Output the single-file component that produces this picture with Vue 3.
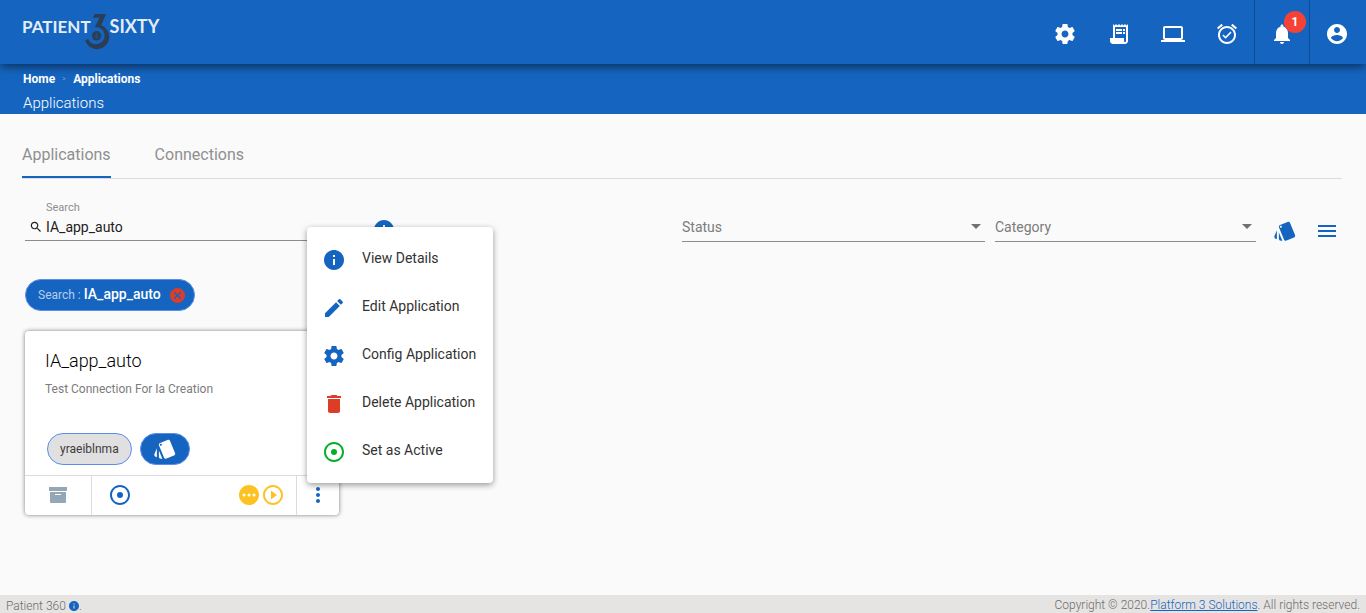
<script setup>
import { ref } from 'vue'

const search = ref('IA_app_auto')

const icons = {
  settings: 'M19.43 12.98c.04-.32.07-.64.07-.98s-.03-.66-.07-.98l2.11-1.65c.19-.15.24-.42.12-.64l-2-3.46c-.12-.22-.39-.3-.61-.22l-2.49 1c-.52-.4-1.08-.73-1.69-.98l-.38-2.65C14.46 2.18 14.25 2 14 2h-4c-.25 0-.46.18-.49.42l-.38 2.65c-.61.25-1.17.59-1.69.98l-2.49-1c-.23-.09-.49 0-.61.22l-2 3.46c-.13.22-.07.49.12.64l2.11 1.65c-.04.32-.07.65-.07.98s.03.66.07.98l-2.11 1.65c-.19.15-.24.42-.12.64l2 3.46c.12.22.39.3.61.22l2.49-1c.52.4 1.08.73 1.69.98l.38 2.65c.03.24.24.42.49.42h4c.25 0 .46-.18.49-.42l.38-2.65c.61-.25 1.17-.59 1.69-.98l2.49 1c.23.09.49 0 .61-.22l2-3.46c.12-.22.07-.49-.12-.64l-2.11-1.65zM12 15.5c-1.93 0-3.5-1.57-3.5-3.5s1.57-3.5 3.5-3.5 3.5 1.57 3.5 3.5-1.57 3.5-3.5 3.5z',
  receipt: 'M19.5 3.5L18 2l-1.5 1.5L15 2l-1.5 1.5L12 2l-1.5 1.5L9 2 7.5 3.5 6 2v14H3v3c0 1.66 1.34 3 3 3h12c1.66 0 3-1.34 3-3V2l-1.5 1.5zM19 19c0 .55-.45 1-1 1s-1-.45-1-1v-3H8V5h11v14zM9 7h6v2H9zM16 7h2v2h-2zM9 10h6v2H9zM16 10h2v2h-2z',
  laptop: 'M20 18c1.1 0 1.99-.9 1.99-2L22 6c0-1.1-.9-2-2-2H4c-1.1 0-2 .9-2 2v10c0 1.1.9 2 2 2H0v2h24v-2h-4zM4 6h16v10H4V6z',
  alarm: 'M22 5.72l-4.6-3.86-1.29 1.53 4.6 3.86L22 5.72zM7.88 3.39L6.6 1.86 2 5.71l1.29 1.53 4.59-3.85zM12 4c-4.97 0-9 4.03-9 9s4.02 9 9 9c4.97 0 9-4.03 9-9s-4.03-9-9-9zm0 16c-3.87 0-7-3.13-7-7s3.13-7 7-7 7 3.13 7 7-3.13 7-7 7zm-1.46-5.47L8.41 12.4l-1.06 1.06 3.18 3.18 6-6-1.06-1.06-4.93 4.95z',
  bell: 'M12 22c1.1 0 2-.9 2-2h-4c0 1.1.89 2 2 2zm6-6v-5c0-3.07-1.64-5.64-4.5-6.32V4c0-.83-.67-1.5-1.5-1.5s-1.5.67-1.5 1.5v.68C7.63 5.36 6 7.92 6 11v5l-2 2v1h16v-1l-2-2z',
  account: 'M12 2C6.48 2 2 6.48 2 12s4.48 10 10 10 10-4.48 10-10S17.52 2 12 2zm0 3c1.66 0 3 1.34 3 3s-1.34 3-3 3-3-1.34-3-3 1.34-3 3-3zm0 14.2c-2.5 0-4.71-1.28-6-3.22.03-1.99 4-3.08 6-3.08 1.99 0 5.97 1.09 6 3.08-1.29 1.94-3.5 3.22-6 3.22z',
  info: 'M12 2C6.48 2 2 6.48 2 12s4.48 10 10 10 10-4.48 10-10S17.52 2 12 2zm1 15h-2v-6h2v6zm0-8h-2V7h2v2z',
  edit: 'M3 17.25V21h3.75L17.81 9.94l-3.75-3.75L3 17.25zM20.71 7.04c.39-.39.39-1.02 0-1.41l-2.34-2.34c-.39-.39-1.02-.39-1.41 0l-1.83 1.83 3.75 3.75 1.83-1.83z',
  trash: 'M6 19c0 1.1.9 2 2 2h8c1.1 0 2-.9 2-2V7H6v12zM19 4h-3.5l-1-1h-5l-1 1H5v2h14V4z',
  target: 'M12 2C6.48 2 2 6.48 2 12s4.48 10 10 10 10-4.48 10-10S17.52 2 12 2zm0 18c-4.42 0-8-3.58-8-8s3.58-8 8-8 8 3.58 8 8-3.58 8-8 8zm0-11a3 3 0 1 0 0 6a3 3 0 1 0 0-6z',
  cards: 'M2.53 19.65l1.34.56v-9.03l-2.43 5.86c-.41 1.02.08 2.19 1.09 2.61zm19.5-3.7L17.07 3.98c-.31-.75-1.04-1.21-1.81-1.23-.26 0-.53.04-.79.15L7.1 5.95c-.75.31-1.21 1.03-1.23 1.8-.01.27.04.54.15.8l4.96 11.97c.31.76 1.05 1.22 1.83 1.23.26 0 .52-.05.77-.15l7.36-3.05c1.02-.42 1.51-1.59 1.09-2.6zM7.88 8.75c-.55 0-1-.45-1-1s.45-1 1-1 1 .45 1 1-.45 1-1 1zm-2 11c0 1.1.9 2 2 2h1.45l-3.45-8.34v6.34z',
  lines: 'M3 18h18v-2H3v2zm0-5h18v-2H3v2zm0-7v2h18V6H3z',
  dots: 'M12 8c1.1 0 2-.9 2-2s-.9-2-2-2-2 .9-2 2 .9 2 2 2zm0 2c-1.1 0-2 .9-2 2s.9 2 2 2 2-.9 2-2-.9-2-2-2zm0 6c-1.1 0-2 .9-2 2s.9 2 2 2 2-.9 2-2-.9-2-2-2z',
  play: 'M10 16.5l6-4.5-6-4.5v9zM12 2C6.48 2 2 6.48 2 12s4.48 10 10 10 10-4.48 10-10S17.52 2 12 2zm0 18c-4.41 0-8-3.59-8-8s3.59-8 8-8 8 3.59 8 8-3.59 8-8 8z',
  pending: 'M12 2C6.48 2 2 6.48 2 12s4.48 10 10 10 10-4.48 10-10S17.52 2 12 2zM7 13.5a1.5 1.5 0 1 1 0-3a1.5 1.5 0 1 1 0 3zM12 13.5a1.5 1.5 0 1 1 0-3a1.5 1.5 0 1 1 0 3zM17 13.5a1.5 1.5 0 1 1 0-3a1.5 1.5 0 1 1 0 3z',
  search: 'M15.5 14h-.79l-.28-.27C15.41 12.59 16 11.11 16 9.5 16 5.91 13.09 3 9.5 3S3 5.91 3 9.5 5.91 16 9.5 16c1.61 0 3.09-.59 4.23-1.57l.27.28v.79l5 4.99L20.49 19l-4.99-5zm-6 0C7.01 14 5 11.99 5 9.5S7.01 5 9.5 5 14 7.01 14 9.5 11.99 14 9.5 14z'
}

const tools = [
  { icon: 'settings', label: 'Settings' },
  { icon: 'receipt', label: 'Audit' },
  { icon: 'laptop', label: 'Workspace' },
  { icon: 'alarm', label: 'Jobs' }
]

const menu = [
  { icon: 'info', label: 'View Details', tone: 'blue' },
  { icon: 'edit', label: 'Edit Application', tone: 'blue' },
  { icon: 'settings', label: 'Config Application', tone: 'blue' },
  { icon: 'trash', label: 'Delete Application', tone: 'red' },
  { icon: 'target', label: 'Set as Active', tone: 'green' }
]
</script>

<template>
  <div class="page">
    <header class="topbar">
      <a class="logo" href="#" aria-label="Patient 3Sixty">
        <span>PATIENT</span>
        <svg class="three" viewBox="0 0 26 38" aria-hidden="true">
          <path d="M10 0H22L17 12A13 13 0 1 1 0 28L3 26A9 9 0 1 0 10 14L15 4H8z" fill="#2c3e55" />
          <circle cx="12" cy="23" r="5" fill="#2c3e55" />
          <path d="M12 20v6M9 24h6" stroke="#1e5290" stroke-width="1" />
        </svg>
        <span>SIXTY</span>
      </a>
      <nav class="tools" aria-label="Tools">
        <button v-for="t in tools" :key="t.icon" class="tool" :aria-label="t.label">
          <svg class="icon" viewBox="0 0 24 24"><path :d="icons[t.icon]" /></svg>
        </button>
        <button class="tool divided" aria-label="Notifications">
          <svg class="icon" viewBox="0 0 24 24"><path :d="icons.bell" /></svg>
          <span class="badge">1</span>
        </button>
        <button class="tool divided" aria-label="Account">
          <svg class="icon" viewBox="0 0 24 24"><path :d="icons.account" /></svg>
        </button>
      </nav>
    </header>

    <section class="subbar">
      <nav class="crumbs" aria-label="Breadcrumb">
        <a href="#">Home</a><span class="sep">&gt;</span><a href="#">Applications</a>
      </nav>
      <h1>Applications</h1>
    </section>

    <main class="content">
      <nav class="tabs">
        <a class="tab active" href="#">Applications</a>
        <a class="tab" href="#">Connections</a>
      </nav>

      <div class="filters">
        <div class="field search">
          <label for="search">Search</label>
          <svg viewBox="0 0 24 24" aria-hidden="true"><path :d="icons.search" /></svg>
          <input id="search" v-model="search" type="text">
        </div>
        <button class="hint blue" aria-label="Search help">
          <svg class="icon" viewBox="0 0 24 24"><path :d="icons.info" /></svg>
        </button>
        <div class="field select status">
          <select aria-label="Status"><option>Status</option></select>
          <svg viewBox="0 0 10 5" aria-hidden="true"><path d="M0 0h10L5 5z" /></svg>
        </div>
        <div class="field select category">
          <select aria-label="Category"><option>Category</option></select>
          <svg viewBox="0 0 10 5" aria-hidden="true"><path d="M0 0h10L5 5z" /></svg>
        </div>
        <div class="views blue">
          <button aria-label="Categories"><svg class="icon" viewBox="0 0 24 24"><path :d="icons.cards" /></svg></button>
          <button aria-label="List view"><svg class="icon" viewBox="0 0 24 24"><path :d="icons.lines" /></svg></button>
        </div>
      </div>

      <div class="chip">
        <span class="chip-key">Search :</span>
        <span class="chip-value">IA_app_auto</span>
        <button aria-label="Remove filter">
          <svg viewBox="0 0 16 16"><circle cx="8" cy="8" r="8" fill="#dd3c27" /><path d="M4.5 4.5l7 7M11.5 4.5l-7 7" stroke="#1565c0" stroke-width="1.5" /></svg>
        </button>
      </div>

      <article class="card">
        <div class="card-body">
          <h2>IA_app_auto</h2>
          <p>Test Connection For Ia Creation</p>
          <div class="tags">
            <span class="tag">yraeiblnma</span>
            <button class="tag solid" aria-label="Category">
              <svg class="icon" viewBox="0 0 24 24"><path :d="icons.cards" /></svg>
            </button>
          </div>
        </div>
        <footer class="card-foot">
          <button class="archive" aria-label="Archive">
            <svg viewBox="0 0 18 16"><path d="M0 0h18v4H0z" /><path fill-rule="evenodd" d="M1 5h16v10q0 1-1 1H2q-1 0-1-1zM6 7h6v1H6z" /></svg>
          </button>
          <div class="states">
            <button class="blue" aria-label="Active state"><svg class="icon" viewBox="0 0 24 24"><path :d="icons.target" /></svg></button>
            <span class="runs">
              <button aria-label="Pending"><svg class="icon" viewBox="0 0 24 24"><path :d="icons.pending" fill-rule="evenodd" /></svg></button>
              <button aria-label="Run"><svg class="icon" viewBox="0 0 24 24"><path :d="icons.play" /></svg></button>
            </span>
          </div>
          <div class="more">
            <button class="blue" aria-label="More actions" aria-expanded="true">
              <svg class="icon" viewBox="0 0 24 24"><path :d="icons.dots" /></svg>
            </button>
            <div class="menu" role="menu">
              <button v-for="m in menu" :key="m.label" role="menuitem">
                <svg class="icon" :class="m.tone" viewBox="0 0 24 24"><path :d="icons[m.icon]" /></svg>
                <span>{{ m.label }}</span>
              </button>
            </div>
          </div>
        </footer>
      </article>
    </main>

    <footer class="bottom">
      <span class="brand"><span>Patient 360</span><svg class="blue" viewBox="2 2 20 20" aria-hidden="true"><path :d="icons.info" /></svg><span>.</span></span>
      <span>Copyright © 2020.<a href="#">Platform 3 Solutions</a>. All rights reserved.</span>
    </footer>
  </div>
</template>

<style>
body { background: #fafafa; }
</style>

<style scoped>
.page {
  min-height: 100vh;
  display: flex;
  flex-direction: column;
  font-family: Roboto, "Liberation Sans", sans-serif;
  font-size: 14px;
  color: #212121;
}
.page * { box-sizing: border-box; }
button {
  display: flex;
  align-items: center;
  justify-content: center;
  padding: 0;
  border: 0;
  background: none;
  color: inherit;
  font: inherit;
  cursor: pointer;
}
svg { display: block; fill: currentColor; flex: none; }
.icon { width: 24px; height: 24px; }
.blue { color: #1565c0; }
.red { color: #dd3c27; }
.green { color: #06ad29; }

.topbar {
  height: 64px;
  display: flex;
  justify-content: space-between;
  padding-left: 22px;
  background: #1565c0;
  color: #fff;
  position: relative;
  z-index: 1;
  box-shadow: 0 2px 10px rgba(0, 0, 0, .6);
}
.logo {
  display: flex;
  align-items: flex-start;
  padding-top: 14px;
  color: #e3edf8;
  font: 700 17px/25px Lato, sans-serif;
  text-decoration: none;
}
.logo span:last-child { font-size: 18px; }
.three { width: 25px; height: 36px; margin: 0 0 0 -6px; }
.tools { display: flex; }
.tool { width: 54px; padding-top: 4px; position: relative; }
.divided { width: 55px; border-left: 1px solid #104d93; }
.divided:last-child { width: 57px; padding-right: 2px; }
.badge {
  position: absolute;
  top: 11px;
  right: 3px;
  width: 22px;
  border-radius: 50%;
  background: #f44336;
  font-size: 12px;
  font-weight: 700;
  line-height: 22px;
}

.subbar {
  height: 50px;
  padding: 6px 23px 0;
  background: #1565c0;
  color: #fff;
}
.crumbs { display: flex; align-items: center; font-size: 12px; line-height: 18px; font-weight: 700; }
.crumbs a { color: inherit; text-decoration: none; }
.sep { width: 18px; text-align: center; font-size: 7px; font-weight: 400; color: #64a0ef; }
h1 { margin: 5px 0 0; font-size: 15px; line-height: 20px; font-weight: 300; }

.content { flex: 1; padding: 16px 24px 0 22px; }
.tabs { display: flex; gap: 44px; border-bottom: 1px solid #dcdcdc; }
.tab {
  height: 48px;
  font-size: 16px;
  line-height: 50px;
  color: #8f8f8f;
  text-decoration: none;
}
.tab.active { border-bottom: 2px solid #1565c0; }

.filters { display: flex; align-items: flex-end; padding: 22px 3px 0; }
.field { position: relative; border-bottom: 1px solid #8c8c8c; }
.search { flex: 0 1 347px; display: grid; grid-template-columns: 21px 1fr; align-items: center; height: 40px; margin-bottom: 1px; }
.search label { grid-column: 2; font-size: 11px; line-height: 13px; color: #8f8f8f; }
.search svg { width: 14px; height: 14px; margin-left: 4px; }
.search input {
  width: 100%;
  height: 26px;
  padding: 0;
  border: 0;
  outline: 0;
  background: none;
  color: #212121;
  font: inherit;
}
.hint { margin: 0 auto 0 0; }
.select { display: flex; align-items: center; height: 30px; }
.select select {
  width: 100%;
  height: 30px;
  padding: 0;
  border: 0;
  outline: 0;
  appearance: none;
  background: none;
  color: #7c7c7c;
  font: inherit;
}
.select svg { position: absolute; right: 4px; width: 10px; color: #707070; pointer-events: none; }
.status { flex: 0 1 303px; margin-right: 10px; }
.category { flex: 0 1 261px; }
.views { display: flex; align-self: flex-end; gap: 18px; height: 23px; padding-left: 17px; }
.views button { align-items: flex-start; }

.chip {
  display: inline-flex;
  align-items: center;
  height: 32px;
  margin: 37px 0 0 3px;
  padding: 0 9px 0 12px;
  border: 1px solid #5b8def;
  border-radius: 16px;
  background: #1565c0;
  color: #fff;
}
.chip-key { margin-right: 3px; font-size: 12px; color: #b5cdec; }
.chip-value { padding-bottom: 2px; font-weight: 500; }
.chip svg { width: 15px; height: 15px; margin-left: 9px; }

.card {
  width: 314px;
  margin: 20px 0 0 3px;
  border-radius: 4px;
  background: #fff;
  box-shadow: 0 0 4px rgba(0, 0, 0, .5);
}
.card-body { padding: 18px 20px 10px; }
h2 { margin: 0; font-size: 18px; line-height: 24px; font-weight: 300; color: #000; }
p { margin: 8px 0 0; font-size: 12px; line-height: 16px; color: #7c7c7c; }
.tags { display: flex; gap: 8px; margin: 36px 0 0 2px; }
.tag {
  height: 32px;
  padding: 0 12px;
  border: 1px solid #5b8def;
  border-radius: 16px;
  background: #e0e0e0;
  font-size: 12px;
  line-height: 30px;
  color: #3c3c3c;
}
.solid { background: #1565c0; color: #fff; }
.card-foot { display: flex; height: 40px; border-top: 1px solid #dcdcdc; }
.archive { width: 66px; padding-bottom: 2px; color: #94a7b7; }
.archive svg { width: 18px; height: 16px; }
.states {
  flex: 1;
  display: flex;
  align-items: center;
  justify-content: space-between;
  padding: 0 11px 2px 16px;
  border: solid #dcdcdc;
  border-width: 0 1px;
}
.runs { display: flex; color: #fdc221; }
.more { position: relative; display: flex; width: 42px; justify-content: center; padding-bottom: 2px; }
.menu {
  position: absolute;
  left: 10px;
  bottom: 32px;
  z-index: 2;
  padding: 8px 0;
  border-radius: 4px;
  background: #fff;
  box-shadow: 0 2px 6px rgba(0, 0, 0, .4);
}
.menu button { width: 100%; height: 48px; padding: 0 17px 0 15px; justify-content: flex-start; gap: 16px; white-space: nowrap; color: #333; }
.menu .icon { margin-top: 2px; }
.menu span { padding-bottom: 2px; }

.bottom {
  display: flex;
  justify-content: space-between;
  height: 18px;
  padding: 0 6px;
  background: #e5e4e2;
  color: #6c6c6c;
  font-size: 12px;
  font-weight: 300;
  line-height: 20px;
}
.brand { display: flex; align-items: center; padding-top: 3px; }
.brand svg { width: 10px; height: 10px; margin-left: 3px; }
.bottom a { color: #1565c0; }
</style>
